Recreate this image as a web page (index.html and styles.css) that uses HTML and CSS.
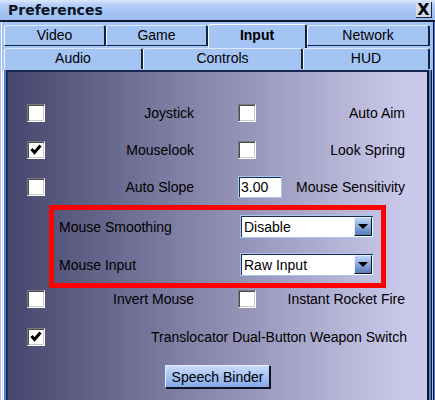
FILE: index.html
```html
<!DOCTYPE html>
<html lang="en">
<head>
    <meta charset="UTF-8">
    <title>Preferences</title>
    <link rel="stylesheet" href="styles.css">
</head>
<body>
    <div class="window">
        <div class="titlebar">
            <span class="title">Preferences</span>
            <span class="close">X</span>
        </div>

        <div class="body">
            <div class="tabs">
                <div class="tab-row top">
                    <div class="tab">Video</div>
                    <div class="tab">Game</div>
                    <div class="tab active">Input</div>
                    <div class="tab">Network</div>
                </div>
                <div class="tab-row bottom">
                    <div class="tab">Audio</div>
                    <div class="tab">Controls</div>
                    <div class="tab">HUD</div>
                </div>
            </div>

            <div class="panel">
                <div class="options">
                    <div class="row">
                        <div class="half"><span class="check"></span><span>Joystick</span></div>
                        <div class="half"><span class="check"></span><span>Auto Aim</span></div>
                    </div>
                    <div class="row">
                        <div class="half">
                            <span class="check">
                                <svg viewBox="0 0 14 14" width="14" height="14"><polyline points="2.5,6 5.5,9.5 11.5,2.5" fill="none" stroke="#000" stroke-width="3"/></svg>
                            </span>
                            <span>Mouselook</span>
                        </div>
                        <div class="half"><span class="check"></span><span>Look Spring</span></div>
                    </div>
                    <div class="row">
                        <div class="half"><span class="check"></span><span>Auto Slope</span></div>
                        <div class="half"><input class="field" type="text" value="3.00"><span>Mouse Sensitivity</span></div>
                    </div>
                </div>

                <div class="highlight">
                    <span>Mouse Smoothing</span>
                    <div class="select"><span>Disable</span><span class="arrow"></span></div>
                    <span>Mouse Input</span>
                    <div class="select"><span>Raw Input</span><span class="arrow"></span></div>
                </div>

                <div class="row after">
                    <div class="half"><span class="check"></span><span>Invert Mouse</span></div>
                    <div class="half"><span class="check"></span><span>Instant Rocket Fire</span></div>
                </div>
                <div class="row wide">
                    <span class="check">
                        <svg viewBox="0 0 14 14" width="14" height="14"><polyline points="2.5,6 5.5,9.5 11.5,2.5" fill="none" stroke="#000" stroke-width="3"/></svg>
                    </span>
                    <span>Translocator Dual-Button Weapon Switch</span>
                </div>

                <div class="actions">
                    <button class="btn">Speech Binder</button>
                </div>
            </div>
        </div>
    </div>
</body>
</html>
```

FILE: styles.css
```css
* {
    margin: 0;
    padding: 0;
    box-sizing: border-box;
}

body {
    width: 435px;
    height: 400px;
    overflow: hidden;
    font-family: "Liberation Sans", Arial, sans-serif;
    font-size: 14px;
    color: #000;
    background: #a4c4f4;
}

.window {
    height: 400px;
    display: flex;
    flex-direction: column;
}

/* title bar */
.titlebar {
    height: 22px;
    display: flex;
    align-items: center;
    justify-content: space-between;
    padding: 0 3px 0 8px;
    background: linear-gradient(#dce8fc, #b4cef6 25%, #a4c4f4 60%, #9cbcee);
    border-bottom: 2px solid #0e1830;
}

.title {
    font-family: "DejaVu Sans", Verdana, sans-serif;
    font-weight: bold;
    font-size: 14px;
    color: #0c1426;
}

.close {
    width: 16px;
    height: 16px;
    background: #d0dcf0;
    border-right: 1px solid #1a2438;
    border-bottom: 1px solid #1a2438;
    font-family: "DejaVu Sans", Verdana, sans-serif;
    font-weight: bold;
    font-size: 16px;
    line-height: 15px;
    text-align: center;
}

/* frame + tabs */
.body {
    flex: 1;
    display: flex;
    flex-direction: column;
    background: linear-gradient(to right,
        #a0c0f0 0 1px, #ffffff 1px 2px, #a4c4f4 2px calc(100% - 3px),
        #a0c0f0 calc(100% - 3px) calc(100% - 2px), #0e1830 calc(100% - 2px) calc(100% - 1px),
        #5a7ac4 calc(100% - 1px));
}

.tabs {
    padding: 3px 5px 0 4px;
}

.tab-row {
    display: grid;
    height: 21px;
}

.tab-row.top {
    grid-template-columns: 102px 102px 99px 123px;
    margin-bottom: 2px;
}

.tab-row.bottom {
    grid-template-columns: 139px 160px 127px;
}

.tab {
    background: #a4c4f4;
    border-left: 1px solid #f4f8ff;
    border-top: 1px solid #dce8fc;
    border-right: 2px solid #14223e;
    border-radius: 3px 3px 0 0;
    text-align: center;
    line-height: 19px;
}

.tab-row.top .tab {
    border-bottom: 1px solid #14223e;
}

.tab-row.top .tab.active {
    margin: -1px 0 -2px;
    border-bottom: none;
    border-top-color: #ffffff;
    font-weight: bold;
    line-height: 21px;
    position: relative;
}

/* content panel */
.panel {
    flex: 1;
    margin: 1px 6px 0 6px;
    border-top: 2px solid #16284e;
    border-left: 2px solid #18305c;
    border-right: 2px solid #0e1830;
    background: linear-gradient(to right, #46466e, #cac8ea 94%);
    box-shadow: -2px 0 #5878c0, -3px 0 #ffffff, -4px 0 #d0e0fa,
                2px 0 #5a7ac4, 3px 0 #0e1830;
}

.options {
    padding-top: 22px;
}

.row {
    display: flex;
    align-items: center;
    gap: 44px;
    height: 37px;
    padding-left: 19px;
}

.half {
    width: 167px;
    display: flex;
    align-items: center;
    justify-content: space-between;
}

.row.after {
    height: 22px;
}

.row.wide {
    height: 22px;
    margin-top: 16px;
    padding-right: 20px;
    justify-content: space-between;
}

.check {
    width: 18px;
    height: 18px;
    flex: none;
    display: flex;
    align-items: center;
    justify-content: center;
    background: #fff;
    border: 1px solid;
    border-color: #7a7a7a #ffffff #ffffff #7a7a7a;
    box-shadow: inset 1px 1px #4a4a4a, inset -1px -1px #c8c8c8;
}

.field {
    width: 44px;
    height: 22px;
    padding-left: 2px;
    font: inherit;
    color: #000;
    background: #fff;
    border: 1px solid #a8c8f0;
    box-shadow: inset 1px 1px #1c2c50;
    outline: none;
}

/* red marked block */
.highlight {
    width: 337px;
    margin-left: 41px;
    border: 5px solid #ff0000;
    display: grid;
    grid-template-columns: 1fr 134px;
    grid-auto-rows: 23px;
    align-items: center;
    row-gap: 15px;
    padding: 5px 7px 7px 5px;
}

.select {
    height: 23px;
    display: flex;
    align-items: center;
    justify-content: space-between;
    padding: 0 1px 0 3px;
    background: #fff;
    border: 1px solid #a8c8f0;
    box-shadow: inset 1px 1px #1c2c50;
}

.arrow {
    width: 18px;
    height: 19px;
    display: flex;
    align-items: center;
    justify-content: center;
    background: linear-gradient(#c0d6f6, #7e9ed4 60%, #5a7ab8);
    border: 1px solid;
    border-color: #e4eefc #0c1424 #0c1424 #e4eefc;
}

.arrow::after {
    content: "";
    border-left: 5px solid transparent;
    border-right: 5px solid transparent;
    border-top: 5px solid #000;
}

.actions {
    display: flex;
    justify-content: center;
    margin-top: 17px;
}

.btn {
    width: 105px;
    height: 23px;
    font: inherit;
    color: #000;
    background: linear-gradient(#c8dcfa, #a4c2f2 50%, #86a8e6);
    border: 1px solid;
    border-color: #e4eefc #0c1424 #0c1424 #e4eefc;
    box-shadow: 1px 1px #0c1424;
}
```
